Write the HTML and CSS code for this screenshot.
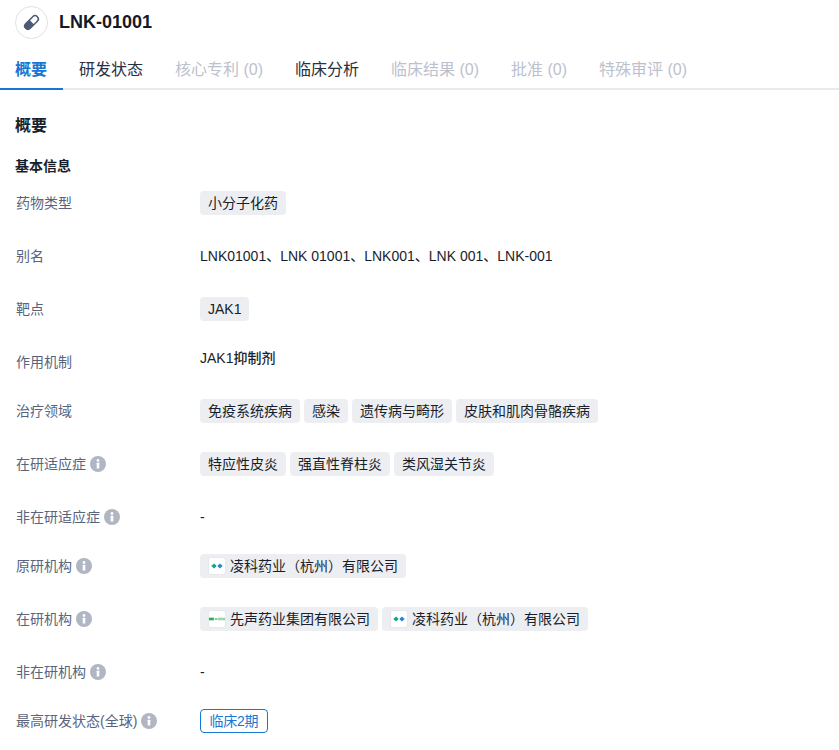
FILE: index.html
```html
<!DOCTYPE html>
<html lang="zh-CN">
<head>
<meta charset="utf-8">
<title>LNK-01001</title>
<link rel="stylesheet" href="styles.css">
</head>
<body>
<svg width="0" height="0" class="defs">
  <defs>
    <symbol id="info" viewBox="0 0 16 16">
      <circle cx="8" cy="8" r="8" fill="#b1b6c4"/>
      <circle cx="8" cy="4.500" r="1.400" fill="#fff"/>
      <rect x="6.700" y="6.800" width="2.600" height="5.800" rx=".4" fill="#fff"/>
    </symbol>
    <symbol id="lk" viewBox="0 0 18 18">
      <path d="M2.500 9l3.200-2.900L8.900 9l-3.200 2.900z" fill="#14a58c"/>
      <path d="M9.100 9l3.200-2.900L15.500 9l-3.200 2.900z" fill="#2a86d8"/>
      <path d="M7.900 9l1.100-1 1.100 1-1.100 1z" fill="#fff"/>
    </symbol>
    <symbol id="sim" viewBox="0 0 18 18">
      <rect x="0" y="7.500" width="5.500" height="3" fill="#27b455"/>
      <rect x="6.500" y="8" width="3" height="2" fill="#6fc48d"/>
      <rect x="10" y="7.500" width="8" height="3" fill="#9fd2b0"/>
    </symbol>
  </defs>
</svg>
<header class="title">
  <span class="avatar">
    <svg width="19" height="19" viewBox="0 0 19 19"><g transform="rotate(-45 9.500 9.500)"><rect x="0.500" y="5.500" width="18" height="8" rx="4" fill="#4e5a75"/><path d="M10 7H14.500a2.500 2.500 0 0 1 0 5H10z" fill="#fff"/></g></svg>
  </span>
  <h1>LNK-01001</h1>
</header>
<nav class="tabs">
  <a class="tab active">概要</a>
  <a class="tab">研发状态</a>
  <a class="tab off">核心专利 (0)</a>
  <a class="tab">临床分析</a>
  <a class="tab off">临床结果 (0)</a>
  <a class="tab off">批准 (0)</a>
  <a class="tab off">特殊审评 (0)</a>
</nav>
<main class="content">
  <h2>概要</h2>
  <h3>基本信息</h3>
  <div class="row"><div class="label">药物类型</div><div class="value"><span class="tag">小分子化药</span></div></div>
  <div class="row"><div class="label">别名</div><div class="value text">LNK01001、LNK 01001、LNK001、LNK 001、LNK-001</div></div>
  <div class="row"><div class="label">靶点</div><div class="value"><span class="tag">JAK1</span></div></div>
  <div class="row short"><div class="label">作用机制</div><div class="value mech">JAK1抑制剂</div></div>
  <div class="row"><div class="label">治疗领域</div><div class="value"><span class="tag">免疫系统疾病</span><span class="tag">感染</span><span class="tag">遗传病与畸形</span><span class="tag">皮肤和肌肉骨骼疾病</span></div></div>
  <div class="row"><div class="label">在研适应症<svg class="i"><use href="#info"/></svg></div><div class="value"><span class="tag">特应性皮炎</span><span class="tag">强直性脊柱炎</span><span class="tag">类风湿关节炎</span></div></div>
  <div class="row short"><div class="label">非在研适应症<svg class="i"><use href="#info"/></svg></div><div class="value text">-</div></div>
  <div class="row"><div class="label">原研机构<svg class="i"><use href="#info"/></svg></div><div class="value"><span class="tag org"><span class="logo"><svg width="16" height="16"><use href="#lk"/></svg></span>凌科药业（杭州）有限公司</span></div></div>
  <div class="row"><div class="label">在研机构<svg class="i"><use href="#info"/></svg></div><div class="value"><span class="tag org"><span class="logo"><svg width="16" height="16"><use href="#sim"/></svg></span>先声药业集团有限公司</span><span class="tag org"><span class="logo"><svg width="16" height="16"><use href="#lk"/></svg></span>凌科药业（杭州）有限公司</span></div></div>
  <div class="row short"><div class="label">非在研机构<svg class="i"><use href="#info"/></svg></div><div class="value text">-</div></div>
  <div class="row"><div class="label">最高研发状态(全球)<svg class="i"><use href="#info"/></svg></div><div class="value"><span class="status">临床2期</span></div></div>
</main>
</body>
</html>
```
FILE: styles.css
```css
* { box-sizing: border-box; }
html, body { margin: 0; padding: 0; background: #fff; height: 750px; overflow: hidden; }
body { font-family: "Liberation Sans", "Noto Sans CJK SC", sans-serif; color: #181e2c; font-size: 14px; }
.defs { position: absolute; }
.title { display: flex; align-items: center; height: 44px; padding: 0 15px; gap: 11px; }
.avatar { width: 33px; height: 33px; border: 1px solid #dfe1e7; border-radius: 50%; display: flex; align-items: center; justify-content: center; }
h1 { margin: 0; font-size: 18px; line-height: 24px; font-weight: 700; color: #14192a; }
.tabs { display: flex; height: 46px; border-bottom: 2px solid #e9eaee; padding-top: 14px; }
.tab { padding: 0 16px; font-size: 16px; line-height: 24px; color: #2b3040; height: 32px; }
.tab:first-child { padding: 0 16px 0 15px; }
.tab.active { color: #1976d2; font-weight: 700; border-bottom: 2px solid #1976d2; }
.tab.off { color: #bcc1cd; }
.content { padding: 0 15px; }
h2 { margin: 24px 0 0; font-size: 16px; line-height: 24px; font-weight: 700; color: #181e2c; }
h3 { margin: 18px 0 0; font-size: 14px; line-height: 20px; font-weight: 700; color: #181e2c; }
.row { display: flex; padding-bottom: 29px; min-height: 53px; }
h3 + .row { margin-top: 15px; }
.row.short { padding-bottom: 25px; min-height: 49px; }
.label { width: 185px; flex: none; color: #59647c; line-height: 24px; display: flex; align-items: center; height: 24px; padding-left: 1px; }
.i { width: 16px; height: 16px; margin-left: 4px; }
.value { display: flex; gap: 4px; color: #181e2c; }
.value.text { line-height: 24px; }
.value.mech { line-height: 16px; font-weight: 500; }
.tag { display: inline-flex; align-items: center; height: 24px; padding: 0 8px; border-radius: 4px; background: #eceef2; line-height: 24px; white-space: nowrap; }
.tag.org { gap: 4px; }
.logo { width: 18px; height: 18px; background: #fff; border-radius: 3px; display: flex; align-items: center; justify-content: center; border: 1px solid #e6e8ed; overflow: hidden; }
.status { display: inline-block; height: 24px; padding: 0 8.5px; border: 1px solid #1976d2; border-radius: 4px; color: #1976d2; line-height: 22px; letter-spacing: -.25px; }
```
